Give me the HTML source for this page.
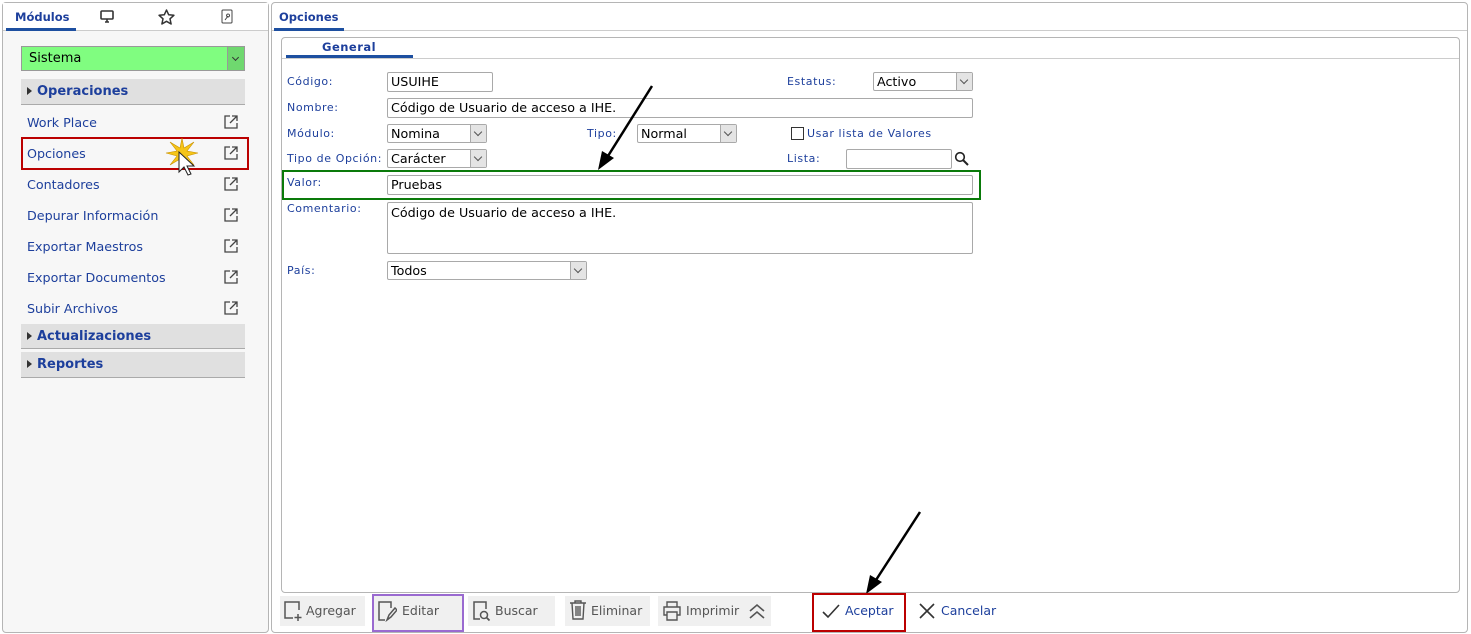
<!DOCTYPE html>
<html><head><meta charset="utf-8"><style>
*{box-sizing:border-box;margin:0;padding:0}
body{width:1471px;height:634px;background:#fff;font-family:"DejaVu Sans","Liberation Sans",sans-serif;position:relative;overflow:hidden}
.a{position:absolute}
.panel{border:1px solid #b5b5b5;border-radius:4px}
.lnk{color:#1d3f9c;font-size:12.7px;left:27px}
.hdr{left:21px;width:224px;background:#e0e0e0;border-bottom:1px solid #aaa;color:#1d3f9c;font-weight:bold;font-size:13px;padding-left:16px}
.hdr:before{content:"";position:absolute;left:6px;top:8px;border-left:5px solid #333;border-top:4px solid transparent;border-bottom:4px solid transparent}
.lbl{color:#1d3f9c;font-size:11px;letter-spacing:.6px}
.inp{border:1px solid #a9a9a9;background:#fff;font-size:12.7px;color:#000;padding-left:3px;border-radius:2px;line-height:17px}
.sel .dd{position:absolute;right:0;top:0;bottom:0;width:16px;background:#e4e4e4;border-left:1px solid #aaa}
.sel .dd:after{content:"";position:absolute;left:4px;top:4px;width:5px;height:5px;border-right:1px solid #555;border-bottom:1px solid #555;transform:rotate(45deg)}
.btn{top:596px;height:30px;background:#f0f0f0;font-size:12.5px;color:#555;line-height:30px}
</style></head><body>
<div class="a panel" style="left:2px;top:2px;width:267px;height:631px;background:#f7f7f7"></div>
<div class="a" style="left:3px;top:3px;width:265px;height:28px;background:#fff;border-bottom:1px solid #ccc"></div>
<div class="a" style="left:15px;top:10px;font-size:11.5px;font-weight:bold;color:#1d3f9c">Módulos</div>
<div class="a" style="left:6px;top:28px;width:70px;height:3px;background:#1d4fa0"></div>
<svg class="a" style="left:100px;top:10px" width="14" height="13" viewBox="0 0 14 13"><rect x="1" y="1" width="12" height="8" rx="1" fill="none" stroke="#333" stroke-width="1.6"/><path d="M5 12h4M7 9v3" stroke="#333" stroke-width="1.6"/></svg>
<svg class="a" style="left:158px;top:9px" width="17" height="16" viewBox="0 0 17 16"><path d="M8.5 1l2.2 4.8 5.2.5-3.9 3.5 1.1 5.2-4.6-2.7-4.6 2.7 1.1-5.2L1.1 6.3l5.2-.5z" fill="none" stroke="#333" stroke-width="1.5" stroke-linejoin="round"/></svg>
<svg class="a" style="left:221px;top:9px" width="12" height="15" viewBox="0 0 12 15"><rect x="1" y="1" width="10" height="13" rx="1" fill="none" stroke="#444"/><path d="M4 11l3-4M7 5a1.5 1.5 0 1 0 .1 0" stroke="#444" fill="none"/></svg>
<div class="a" style="left:21px;top:46px;width:224px;height:25px;background:#80fd80;border:1px solid #999;font-size:13px;padding:4px 7px">Sistema<div class="a" style="right:0;top:0;width:17px;height:23px;background:#6fd86f;border-left:1px solid #999"></div><div class="a" style="right:6px;top:8px;width:5px;height:5px;border-right:1px solid #333;border-bottom:1px solid #333;transform:rotate(45deg)"></div></div>
<div class="a hdr" style="top:79px;height:26px;line-height:24px;padding-top:1px">Operaciones</div>
<div class="a lnk" style="top:115px">Work Place</div>
<div class="a lnk" style="top:146px">Opciones</div>
<div class="a lnk" style="top:177px">Contadores</div>
<div class="a lnk" style="top:208px">Depurar Información</div>
<div class="a lnk" style="top:239px">Exportar Maestros</div>
<div class="a lnk" style="top:270px">Exportar Documentos</div>
<div class="a lnk" style="top:301px">Subir Archivos</div>
<svg class="a" style="left:224px;top:115px" width="14" height="200" viewBox="0 0 14 200">
<g fill="none" stroke="#444" stroke-width="1.3">
<path id="e" d="M6 1H1v12h12V8M8 1h5v5M13 1L6 8"/>
<use href="#e" y="31"/><use href="#e" y="62"/><use href="#e" y="93"/><use href="#e" y="124"/><use href="#e" y="155"/><use href="#e" y="186"/></g></svg>
<div class="a" style="left:21px;top:137px;width:228px;height:33px;border:2px solid #b00"></div>
<svg class="a" style="left:165px;top:136px" width="36" height="44" viewBox="0 0 36 44"><path d="M17 2l2 10 10-6-7 9 11 2-11 3 7 9-10-6-2 10-2-10-10 6 7-9-11-3 11-2-7-9 10 6z" fill="#f5c518" stroke="#c89000" stroke-width=".6"/><path d="M14 16v20l5-5 4 8 3-1-4-8h7z" fill="#fff" stroke="#222"/></svg>
<div class="a hdr" style="top:324px;height:25px;line-height:23px;padding-top:1px">Actualizaciones</div>
<div class="a hdr" style="top:352px;height:26px;line-height:24px;padding-top:1px">Reportes</div>

<div class="a panel" style="left:271px;top:2px;width:1197px;height:631px;background:#fff"></div>
<div class="a" style="left:272px;top:30px;width:1195px;height:1px;background:#ccc"></div>
<div class="a" style="left:279px;top:10px;font-size:11.5px;font-weight:bold;color:#1d3f9c">Opciones</div>
<div class="a" style="left:274px;top:28px;width:70px;height:3px;background:#1d4fa0"></div>
<div class="a" style="left:281px;top:37px;width:1179px;height:556px;border:1px solid #b5b5b5;border-radius:4px"></div>
<div class="a" style="left:282px;top:58px;width:1177px;height:1px;background:#ccc"></div>
<div class="a" style="left:322px;top:40px;font-size:11.5px;font-weight:bold;color:#1d3f9c;letter-spacing:.5px">General</div>
<div class="a" style="left:286px;top:55px;width:127px;height:3px;background:#1d4fa0"></div>

<div class="a lbl" style="left:287px;top:75px">Código:</div>
<div class="a inp" style="left:387px;top:72px;width:106px;height:20px">USUIHE</div>
<div class="a lbl" style="left:787px;top:75px">Estatus:</div>
<div class="a inp sel" style="left:873px;top:72px;width:100px;height:19px">Activo<span class="dd"></span></div>
<div class="a lbl" style="left:287px;top:101px">Nombre:</div>
<div class="a inp" style="left:387px;top:98px;width:586px;height:20px">Código de Usuario de acceso a IHE.</div>
<div class="a lbl" style="left:287px;top:127px">Módulo:</div>
<div class="a inp sel" style="left:387px;top:124px;width:100px;height:19px">Nomina<span class="dd"></span></div>
<div class="a lbl" style="left:587px;top:127px">Tipo:</div>
<div class="a inp sel" style="left:637px;top:124px;width:100px;height:19px">Normal<span class="dd"></span></div>
<div class="a" style="left:791px;top:127px;width:13px;height:13px;border:1px solid #333;background:#fff"></div>
<div class="a lbl" style="left:807px;top:127px">Usar lista de Valores</div>
<div class="a lbl" style="left:287px;top:152px">Tipo de Opción:</div>
<div class="a inp sel" style="left:387px;top:149px;width:100px;height:19px">Carácter<span class="dd"></span></div>
<div class="a lbl" style="left:787px;top:152px">Lista:</div>
<div class="a inp" style="left:846px;top:149px;width:106px;height:20px"></div>
<svg class="a" style="left:954px;top:151px" width="15" height="15" viewBox="0 0 15 15"><circle cx="6" cy="6" r="4.3" fill="none" stroke="#222" stroke-width="1.6"/><path d="M9 9l5 5" stroke="#222" stroke-width="2"/></svg>
<div class="a" style="left:282px;top:170px;width:699px;height:30px;border:2px solid #0a7a0a"></div>
<div class="a lbl" style="left:287px;top:176px">Valor:</div>
<div class="a inp" style="left:387px;top:175px;width:586px;height:20px">Pruebas</div>
<div class="a lbl" style="left:287px;top:202px">Comentario:</div>
<div class="a inp" style="left:387px;top:202px;width:586px;height:52px;padding-top:1px">Código de Usuario de acceso a IHE.</div>
<div class="a lbl" style="left:287px;top:264px">País:</div>
<div class="a inp sel" style="left:387px;top:261px;width:200px;height:19px">Todos<span class="dd"></span></div>

<svg class="a" style="left:0;top:0" width="1471" height="634"><g stroke="#000" stroke-width="2.5"><path d="M652 86L608 156"/><path d="M920 512L876 580"/></g><path d="M598 170l4-19 12 7z M866 594l4-19 12 7z" fill="#000"/></svg>

<div class="a btn" style="left:280px;width:85px;padding-left:26px">Agregar</div>
<svg class="a" style="left:283px;top:600px" width="20" height="22"><path d="M11 2H2v16h8M2 2h14v8" fill="none" stroke="#555" stroke-width="1.5"/><path d="M15 14v7M11.5 17.5h7" stroke="#555" stroke-width="1.5"/></svg>
<div class="a btn" style="left:372px;width:92px;padding-left:28px;border:2px solid #9a6ad0;line-height:26px;top:594px;height:38px;padding-top:2px">Editar</div>
<svg class="a" style="left:377px;top:600px" width="20" height="22"><path d="M12 2H2v18h6M2 2h12v6M10 20l2-5 6-7 2 2-6 7z" fill="none" stroke="#555" stroke-width="1.5"/></svg>
<div class="a btn" style="left:468px;width:87px;padding-left:27px">Buscar</div>
<svg class="a" style="left:472px;top:600px" width="20" height="22"><path d="M8 19H2V2h12v7" fill="none" stroke="#555" stroke-width="1.5"/><circle cx="12" cy="15" r="3.5" fill="none" stroke="#555" stroke-width="1.5"/><path d="M14.5 17.5l3 3" stroke="#555" stroke-width="1.8"/></svg>
<div class="a btn" style="left:565px;width:85px;padding-left:26px">Eliminar</div>
<svg class="a" style="left:568px;top:599px" width="20" height="22"><path d="M2 4h16M7 4V2h6v2M4 4l1 16h10l1-16M8 7v10M10 7v10M12 7v10" fill="none" stroke="#555" stroke-width="1.4"/></svg>
<div class="a btn" style="left:658px;width:84px;padding-left:28px">Imprimir</div>
<svg class="a" style="left:662px;top:600px" width="20" height="22"><path d="M5 7V2h10v5M5 15H2V7h16v8h-3M5 12h10v8H5z" fill="none" stroke="#555" stroke-width="1.4"/></svg>
<div class="a btn" style="left:742px;width:29px"></div>
<svg class="a" style="left:747px;top:601px" width="20" height="20"><path d="M3 10l7-6 7 6M3 17l7-6 7 6" fill="none" stroke="#555" stroke-width="1.6"/></svg>
<div class="a" style="left:812px;top:593px;width:94px;height:39px;border:2px solid #b00"></div>
<svg class="a" style="left:822px;top:603px" width="18" height="16"><path d="M1 9l5 5L17 2" fill="none" stroke="#333" stroke-width="1.6"/></svg>
<div class="a" style="left:845px;top:603px;font-size:12.5px;color:#1d3f9c">Aceptar</div>
<svg class="a" style="left:919px;top:603px" width="16" height="16"><path d="M1 1l14 14M15 1L1 15" stroke="#333" stroke-width="1.6"/></svg>
<div class="a" style="left:941px;top:603px;font-size:12.5px;color:#1d3f9c">Cancelar</div>
</body></html>
